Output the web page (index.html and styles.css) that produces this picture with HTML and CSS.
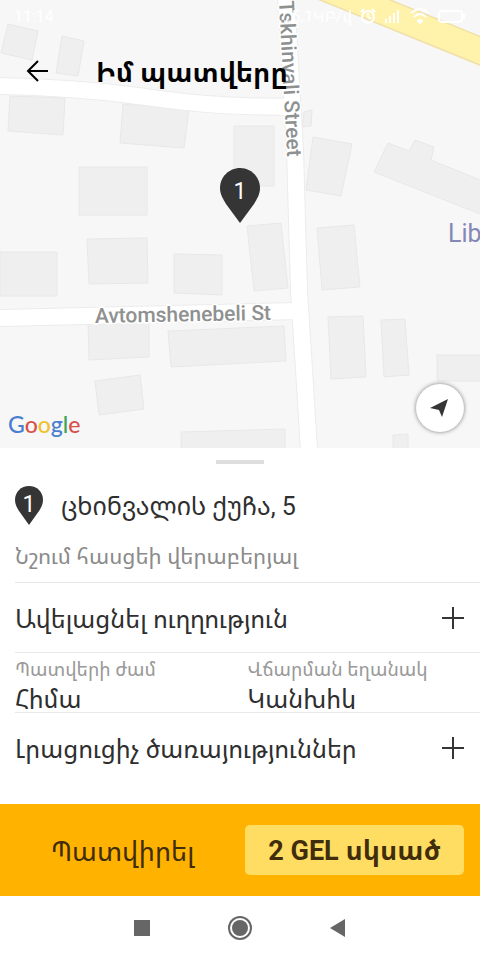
FILE: index.html
```html
<!DOCTYPE html>
<html lang="hy">
	<head>
		<meta charset="utf-8">
		<meta name="viewport" content="width=device-width, initial-scale=1.0">
		<link rel="stylesheet" href="styles.css">
		<title>Իմ պատվերը</title>
	</head>
	<body>
		<div class="map">
			<svg class="map-canvas" viewBox="0 0 480 448" preserveAspectRatio="xMidYMin slice">
				<!-- buildings -->
				<g class="buildings">
					<path d="M8 24L38 31L32 60L1 53Z"/>
					<path d="M62 36L84 41L78 76L56 73Z"/>
					<path d="M10 96L65 98L63 135L8 131Z"/>
					<path d="M123 104L189 109L184 148L120 143Z"/>
					<path d="M79 167H147V215H79Z"/>
					<path d="M234 126H274V186H234Z"/>
					<path d="M304 112L312 110L311 126L302 127Z"/>
					<path d="M313 137L352 144L341 196L306 190Z"/>
					<path d="M388 143L409 151L415 140L434 147L431 160L490 184V218L374 172Z"/>
					<path d="M247 226L281 223L288 288L254 291Z"/>
					<path d="M317 228L354 225L360 287L322 290Z"/>
					<path d="M0 252H57V296H0Z"/>
					<path d="M87 239L147 238L148 283L89 284Z"/>
					<path d="M174 254L222 255V295L174 293Z"/>
					<path d="M88 318L149 320L149 357L89 360Z"/>
					<path d="M168 331L284 326L286 361L171 367Z"/>
					<path d="M95 381L140 375L144 409L99 415Z"/>
					<path d="M181 432L285 429V460H181Z"/>
					<path d="M328 317L363 316L366 377L331 379Z"/>
					<path d="M381 320L405 319L409 375L384 377Z"/>
					<path d="M437 355H490V381H437Z"/>
					<path d="M393 435L408 434V460H393Z"/>
				</g>
				<!-- streets -->
				<path class="street-edge" d="M-5 86C50 87 90 90 130 95S205 107 300 107M-5 318L300 311M286 -5L295 150L299 290L310 465"/>
				<path class="street" d="M-5 86C50 87 90 90 130 95S205 107 300 107M-5 318L300 311M286 -5L295 150L299 290L310 465"/>
				<path class="highway-edge" d="M316 -16L500 59"/>
				<path class="highway" d="M316 -16L500 59"/>
				<text class="street-name" x="95" y="323" transform="rotate(-1 95 323)">Avtomshenebeli St</text>
				<text class="street-name" x="279" y="1" transform="rotate(87 279 1)">Tskhinvali Street</text>
				<text class="place-name" x="448" y="242">Library</text>
			</svg>

			<div class="status-bar">
				<span>11:14</span>
				<span class="status-icons">
					<span>...5.1ԿԲ/վ</span>
					<svg width="16" height="16" viewBox="0 0 16 16"><circle cx="8" cy="9" r="6"/><path d="M8 5V9L11 11M1 4L4 1M12 1L15 4"/></svg>
					<svg width="18" height="16" viewBox="0 0 18 16"><path d="M2 15V11M6 15V8M10 15V5M14 15V2"/></svg>
					<svg width="20" height="16" viewBox="0 0 20 16"><path d="M1 5Q10 -3 19 5M4 9Q10 3 16 9M8 13L10 15L12 13Q10 11 8 13Z"/></svg>
					<svg width="28" height="16" viewBox="0 0 28 16"><rect x="1" y="3" width="23" height="11" rx="3"/><path d="M26 6V11"/></svg>
				</span>
			</div>

			<header class="top-bar">
				<button class="back" type="button" aria-label="Հետ">
					<svg width="24" height="24" viewBox="0 0 24 24"><path d="M22 12H3M12 2L2 12L12 22"/></svg>
				</button>
				<h1>Իմ պատվերը</h1>
			</header>

			<svg class="map-pin" viewBox="0 0 40 55">
				<path d="M20 0C9 0 0 9 0 20C0 26 3 31 6 36L20 55L34 36C37 31 40 26 40 20C40 9 31 0 20 0Z"/>
				<text x="20" y="31">1</text>
			</svg>

			<div class="google"><span class="blue">G</span><span class="red">o</span><span class="yellow">o</span><span class="blue">g</span><span class="green">l</span><span class="red">e</span></div>

			<button class="locate" type="button" aria-label="Իմ տեղը">
				<svg width="20" height="20" viewBox="0 0 20 20"><path d="M18 1L12 19L9 12L0 10Z"/></svg>
			</button>
		</div>

		<main class="sheet">
			<div class="handle"></div>
			<div class="address">
				<svg class="pin" viewBox="0 0 28 39">
					<path d="M14 0C6 0 0 6 0 14C0 18 2 22 4 25L14 39L24 25C26 22 28 18 28 14C28 6 22 0 14 0Z"/>
					<text x="14" y="26">1</text>
				</svg>
				<span lang="ka">ცხინვალის ქუჩა, 5</span>
			</div>
			<input class="note" type="text" placeholder="Նշում հասցեի վերաբերյալ" aria-label="Նշում հասցեի վերաբերյալ">
			<button class="row" type="button">
				<span>Ավելացնել ուղղություն</span>
				<svg width="22" height="22" viewBox="0 0 22 22"><path d="M11 0V22M0 11H22"/></svg>
			</button>
			<div class="details">
				<div class="detail">
					<span class="label">Պատվերի ժամ</span>
					<span class="value">Հիմա</span>
				</div>
				<div class="detail">
					<span class="label">Վճարման եղանակ</span>
					<span class="value">Կանխիկ</span>
				</div>
			</div>
			<button class="row" type="button">
				<span>Լրացուցիչ ծառայություններ</span>
				<svg width="22" height="22" viewBox="0 0 22 22"><path d="M11 0V22M0 11H22"/></svg>
			</button>
		</main>

		<button class="order" type="button">
			<span class="order-text">Պատվիրել</span>
			<span class="price">2 GEL սկսած</span>
		</button>

		<nav class="nav-bar">
			<button type="button" aria-label="Վերջինները">
				<svg width="24" height="24" viewBox="0 0 24 24"><path d="M4 4H20V20H4Z"/></svg>
			</button>
			<button type="button" aria-label="Գլխավոր">
				<svg width="24" height="24" viewBox="0 0 24 24"><circle cx="12" cy="12" r="8"/><circle class="ring" cx="12" cy="12" r="11"/></svg>
			</button>
			<button type="button" aria-label="Հետ">
				<svg width="24" height="24" viewBox="0 0 24 24"><path d="M19 3V21L4 12Z"/></svg>
			</button>
		</nav>
	</body>
</html>
```
FILE: styles.css
```css
* {
	margin: 0;
	padding: 0;
	box-sizing: border-box;
}

body {
	display: flex;
	flex-direction: column;
	min-height: 100vh;
	background-color: #fff;
	color: #2f2f2f;
	font-family: Roboto, "Noto Sans Armenian", "Noto Sans Georgian", "Noto Sans", "DejaVu Sans", sans-serif;
}

button,
input {
	border: none;
	background: none;
	color: inherit;
	font: inherit;
}

/* map */
.map {
	position: relative;
	flex: 1;
	min-height: 300px;
	background-color: #f7f7f7;
}

.map-canvas {
	position: absolute;
	width: 100%;
	height: 100%;
}

.buildings {
	fill: #efefef;
	stroke: #e8e8e8;
}

.street,
.street-edge,
.highway,
.highway-edge {
	fill: none;
	stroke: #fff;
	stroke-width: 16;
}

.street-edge {
	stroke: #ececec;
	stroke-width: 18;
}

.highway {
	stroke: #fff2ab;
	stroke-width: 25;
}

.highway-edge {
	stroke: #f0e0a8;
	stroke-width: 28;
}

.street-name {
	fill: #8f9191;
	stroke: #fff;
	stroke-width: 3;
	paint-order: stroke;
	font-size: 21px;
	font-weight: 500;
}

.place-name {
	fill: #8587b5;
	font-size: 25px;
}

.status-bar {
	position: relative;
	display: flex;
	justify-content: space-between;
	padding: 8px 14px 0;
	height: 36px;
	color: #fff;
	font-size: 16px;
	line-height: 18px;
}

.status-icons {
	display: flex;
	gap: 8px;
}

.status-icons svg {
	fill: none;
	stroke: #fff;
	stroke-width: 2;
}

.top-bar {
	position: relative;
	display: flex;
	align-items: center;
	padding-left: 26px;
	gap: 46px;
	height: 70px;
}

.back {
	height: 24px;
}

.back svg {
	fill: none;
	stroke: #000;
	stroke-width: 2;
}

h1 {
	color: #000;
	font-size: 27px;
	font-weight: 700;
}

.map-pin {
	position: absolute;
	top: 168px;
	left: 50%;
	margin-left: -20px;
	width: 40px;
	height: 55px;
	fill: #353535;
}

.map-pin text,
.pin text {
	fill: #fff;
	font-size: 23px;
	text-anchor: middle;
}

.google {
	position: absolute;
	left: 8px;
	bottom: 10px;
	font-family: Lato, sans-serif;
	font-size: 23px;
	font-weight: 500;
	line-height: 28px;
}

.blue { color: #4a7fd0; }
.red { color: #d9504a; }
.yellow { color: #efc22d; }
.green { color: #3da35d; }

.locate {
	position: absolute;
	right: 16px;
	bottom: 16px;
	display: flex;
	align-items: center;
	justify-content: center;
	width: 48px;
	height: 48px;
	border-radius: 50%;
	background-color: #fff;
	box-shadow: 0 0 4px rgba(0, 0, 0, 0.5);
	fill: #353535;
}

/* bottom sheet */
.sheet {
	padding-bottom: 22px;
	border-radius: 6px 6px 0 0;
	background-color: #fff;
}

.handle {
	margin: 0 auto;
	width: 48px;
	height: 16px;
	border-bottom: 4px solid #dedede;
}

.address {
	display: flex;
	align-items: center;
	gap: 18px;
	padding: 0 15px;
	height: 82px;
	font-size: 25px;
}

.pin {
	width: 28px;
	height: 39px;
	fill: #353535;
}

.note {
	display: block;
	padding: 0 15px 16px;
	width: 100%;
	height: 36px;
	font-size: 22px;
	line-height: 20px;
}

.note::placeholder {
	color: #8b8b8b;
	opacity: 1;
}

.row {
	display: flex;
	align-items: center;
	justify-content: space-between;
	padding-right: 16px;
	margin-left: 15px;
	width: calc(100% - 15px);
	height: 70px;
	border-top: 1px solid #e8e8e8;
	font-size: 25px;
	text-align: left;
}

.row svg {
	stroke: #353535;
	stroke-width: 2;
}

.details {
	display: grid;
	grid-template-columns: 1fr 1fr;
	margin-left: 15px;
	height: 60px;
	border-top: 1px solid #e8e8e8;
}

.detail span {
	display: block;
	white-space: nowrap;
}

.label {
	padding-top: 4px;
	color: #999;
	font-size: 19px;
	line-height: 26px;
}

.value {
	height: 26px;
	overflow: hidden;
	font-size: 25px;
	line-height: 34px;
}

/* order button */
.order {
	display: flex;
	align-items: center;
	padding: 0 16px 0 0;
	height: 92px;
	background-color: #ffb300;
	color: #3f2d0c;
	font-size: 27px;
}

.order-text {
	flex: 1;
}

.price {
	flex: 0 0 219px;
	padding-top: 2px;
	border-radius: 5px;
	background-color: #ffdd62;
	font-weight: 700;
	line-height: 48px;
}

/* system buttons */
.nav-bar {
	display: flex;
	justify-content: center;
	gap: 74px;
	padding: 20px 0;
	fill: #666;
}

.nav-bar button {
	height: 24px;
}

.nav-bar .ring {
	fill: none;
	stroke: #666;
	stroke-width: 2;
}
```
